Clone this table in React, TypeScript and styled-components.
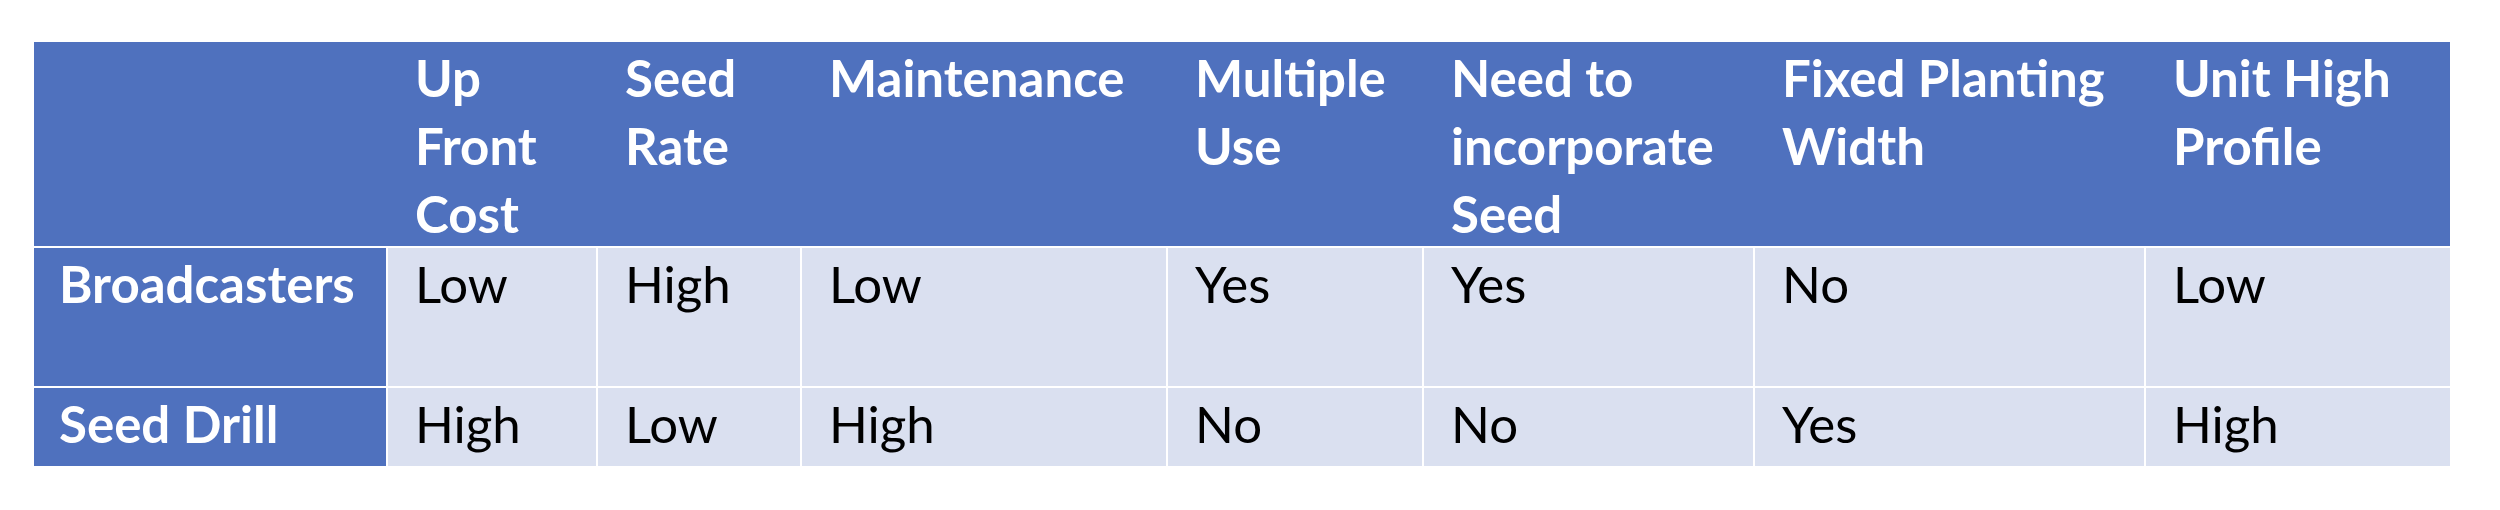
import React from "react";
import styled, { createGlobalStyle } from "styled-components";

const GlobalStyle = createGlobalStyle`
  body {
    margin: 0;
    background: #ffffff;
    font-family: Lato, "Open Sans", sans-serif;
  }
`;

const columns = "352px 208px 202px 364px 254px 329px 389px 304px";

const headers: string[][] = [
  [],
  ["Up", "Front", "Cost"],
  ["Seed", "Rate"],
  ["Maintenance"],
  ["Multiple", "Use"],
  ["Need to", "incorporate", "Seed"],
  ["Fixed Planting", "Width"],
  ["Unit High", "Profile"],
];

const rows = [
  { name: "Broadcasters", height: 138, values: ["Low", "High", "Low", "Yes", "Yes", "No", "Low"] },
  { name: "Seed Drill", height: 78, values: ["High", "Low", "High", "No", "No", "Yes", "High"] },
];

export default function App() {
  return (
    <Page>
      <GlobalStyle />
      <Table>
        <HeaderRow>
          {headers.map((lines, i) => (
            <HeadCell key={i}>
              {lines.map((line) => (
                <Line key={line}>{line}</Line>
              ))}
            </HeadCell>
          ))}
        </HeaderRow>
        {rows.map((row) => (
          <BodyRow key={row.name} height={row.height}>
            <RowHead>{row.name}</RowHead>
            {row.values.map((v, i) => (
              <Cell key={i}>{v}</Cell>
            ))}
          </BodyRow>
        ))}
      </Table>
    </Page>
  );
}

const Page = styled.div`
  padding: 42px 0 0 34px;
`;

const Table = styled.div`
  width: 2416px;
  display: flex;
  flex-direction: column;
  gap: 2px;
  background: #ffffff;
`;

const HeaderRow = styled.div`
  display: grid;
  grid-template-columns: ${columns};
  column-gap: 2px;
  height: 204px;
  background: #4f71be;
`;

const HeadCell = styled.div`
  padding: 2px 0 0 27px;
  color: #ffffff;
  font-weight: 700;
  font-size: 51px;
  line-height: 68px;
`;

const Line = styled.div`
  white-space: nowrap;
`;

const BodyRow = styled.div<{ height: number }>`
  display: grid;
  grid-template-columns: ${columns};
  column-gap: 2px;
  height: ${(p) => p.height}px;
`;

const RowHead = styled.div`
  background: #4f71be;
  color: #ffffff;
  font-weight: 700;
  font-size: 51px;
  line-height: 68px;
  padding: 2px 0 0 25px;
  white-space: nowrap;
`;

const Cell = styled.div`
  background: #dae0f0;
  color: #000000;
  font-size: 51px;
  line-height: 68px;
  padding: 2px 0 0 27px;
  white-space: nowrap;
`;
